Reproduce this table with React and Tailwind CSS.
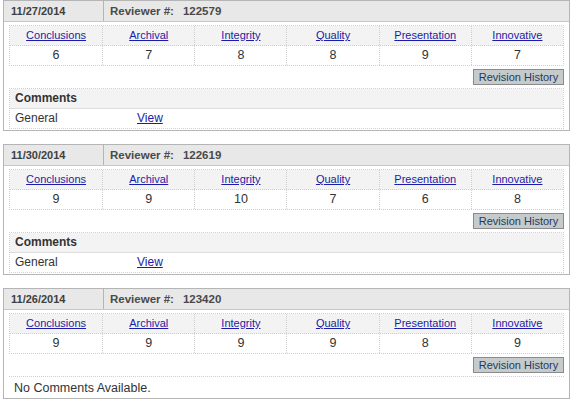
import React from "react";

const reviews = [
  {
    date: "11/27/2014",
    reviewer: "122579",
    scores: [6, 7, 8, 8, 9, 7],
    comments: true,
  },
  {
    date: "11/30/2014",
    reviewer: "122619",
    scores: [9, 9, 10, 7, 6, 8],
    comments: true,
  },
  {
    date: "11/26/2014",
    reviewer: "123420",
    scores: [9, 9, 9, 9, 8, 9],
    comments: false,
  },
];

const criteria = ["Conclusions", "Archival", "Integrity", "Quality", "Presentation", "Innovative"];

const ReviewPanel = ({ review }) => {
  return (
    <div className="border border-[#b5b5b5] mb-[13px] bg-white">
      <div className="flex h-[21px] bg-[#e8e8e8] border-b border-[#c8c8c8] text-[11px] font-bold text-[#404040] leading-[20px]">
        <div className="w-[100px] pl-[7px] border-r border-[#b5b5b5]">{review.date}</div>
        <div className="pl-[6px] text-[11.5px] text-[#4a4a4a]">
          Reviewer #:<span className="ml-[9px]">{review.reviewer}</span>
        </div>
      </div>

      <div className="px-[5px] pt-[3px] pb-0">
        <div className="border border-dotted border-[#cfcfcf]">
          <div className="grid grid-cols-6 h-[20px] bg-[#f3f3f3] border-b border-dotted border-[#cfcfcf]">
            {criteria.map((c, i) => (
              <div
                key={c}
                className={
                  "text-center text-[11px] leading-[19px] " +
                  (i > 0 ? "border-l border-dotted border-[#cfcfcf]" : "")
                }
              >
                <a href="#" className="text-[#1c1ca8] underline">
                  {c}
                </a>
              </div>
            ))}
          </div>
          <div className="grid grid-cols-6 h-[19px]">
            {review.scores.map((s, i) => (
              <div
                key={i}
                className={
                  "text-center text-[12.5px] leading-[19px] text-[#333]" +
                  (i > 0 ? " border-l border-dotted border-[#cfcfcf]" : "")
                }
              >
                {s}
              </div>
            ))}
          </div>
        </div>

        <div className="flex justify-end mt-[3px]">
          <button className="w-[91px] h-[16px] bg-[#c5cacd] border border-[#8a8a8a] text-[11px] leading-[14px] text-[#1f3c5a] font-['Liberation_Sans',Arial,sans-serif]">
            Revision History
          </button>
        </div>

        {review.comments ? (
          <div className="mt-[3px] mb-[1px] border border-dotted border-[#cfcfcf]">
            <div className="h-[20px] bg-[#f3f3f3] border-b border-[#dcdcdc] pl-[5px] text-[12px] font-bold text-[#333] leading-[19px]">
              Comments
            </div>
            <div className="flex h-[19px] text-[12px] leading-[19px] text-[#333]">
              <div className="w-[127px] pl-[5px]">General</div>
              <a href="#" className="text-[#1c1ca8] underline">
                View
              </a>
            </div>
          </div>
        ) : (
          <div className="mt-[3px] border-t border-dotted border-[#cfcfcf] h-[22px] pl-[5px] text-[12.5px] leading-[22px] text-[#333]">
            No Comments Available.
          </div>
        )}
      </div>
    </div>
  );
};

const App = () => {
  return (
    <div className="w-[573px] h-[402px] bg-white px-[3px] overflow-hidden font-['Liberation_Sans',Arial,sans-serif]">
      {reviews.map((r) => (
        <ReviewPanel key={r.reviewer} review={r} />
      ))}
    </div>
  );
};

export default App;
